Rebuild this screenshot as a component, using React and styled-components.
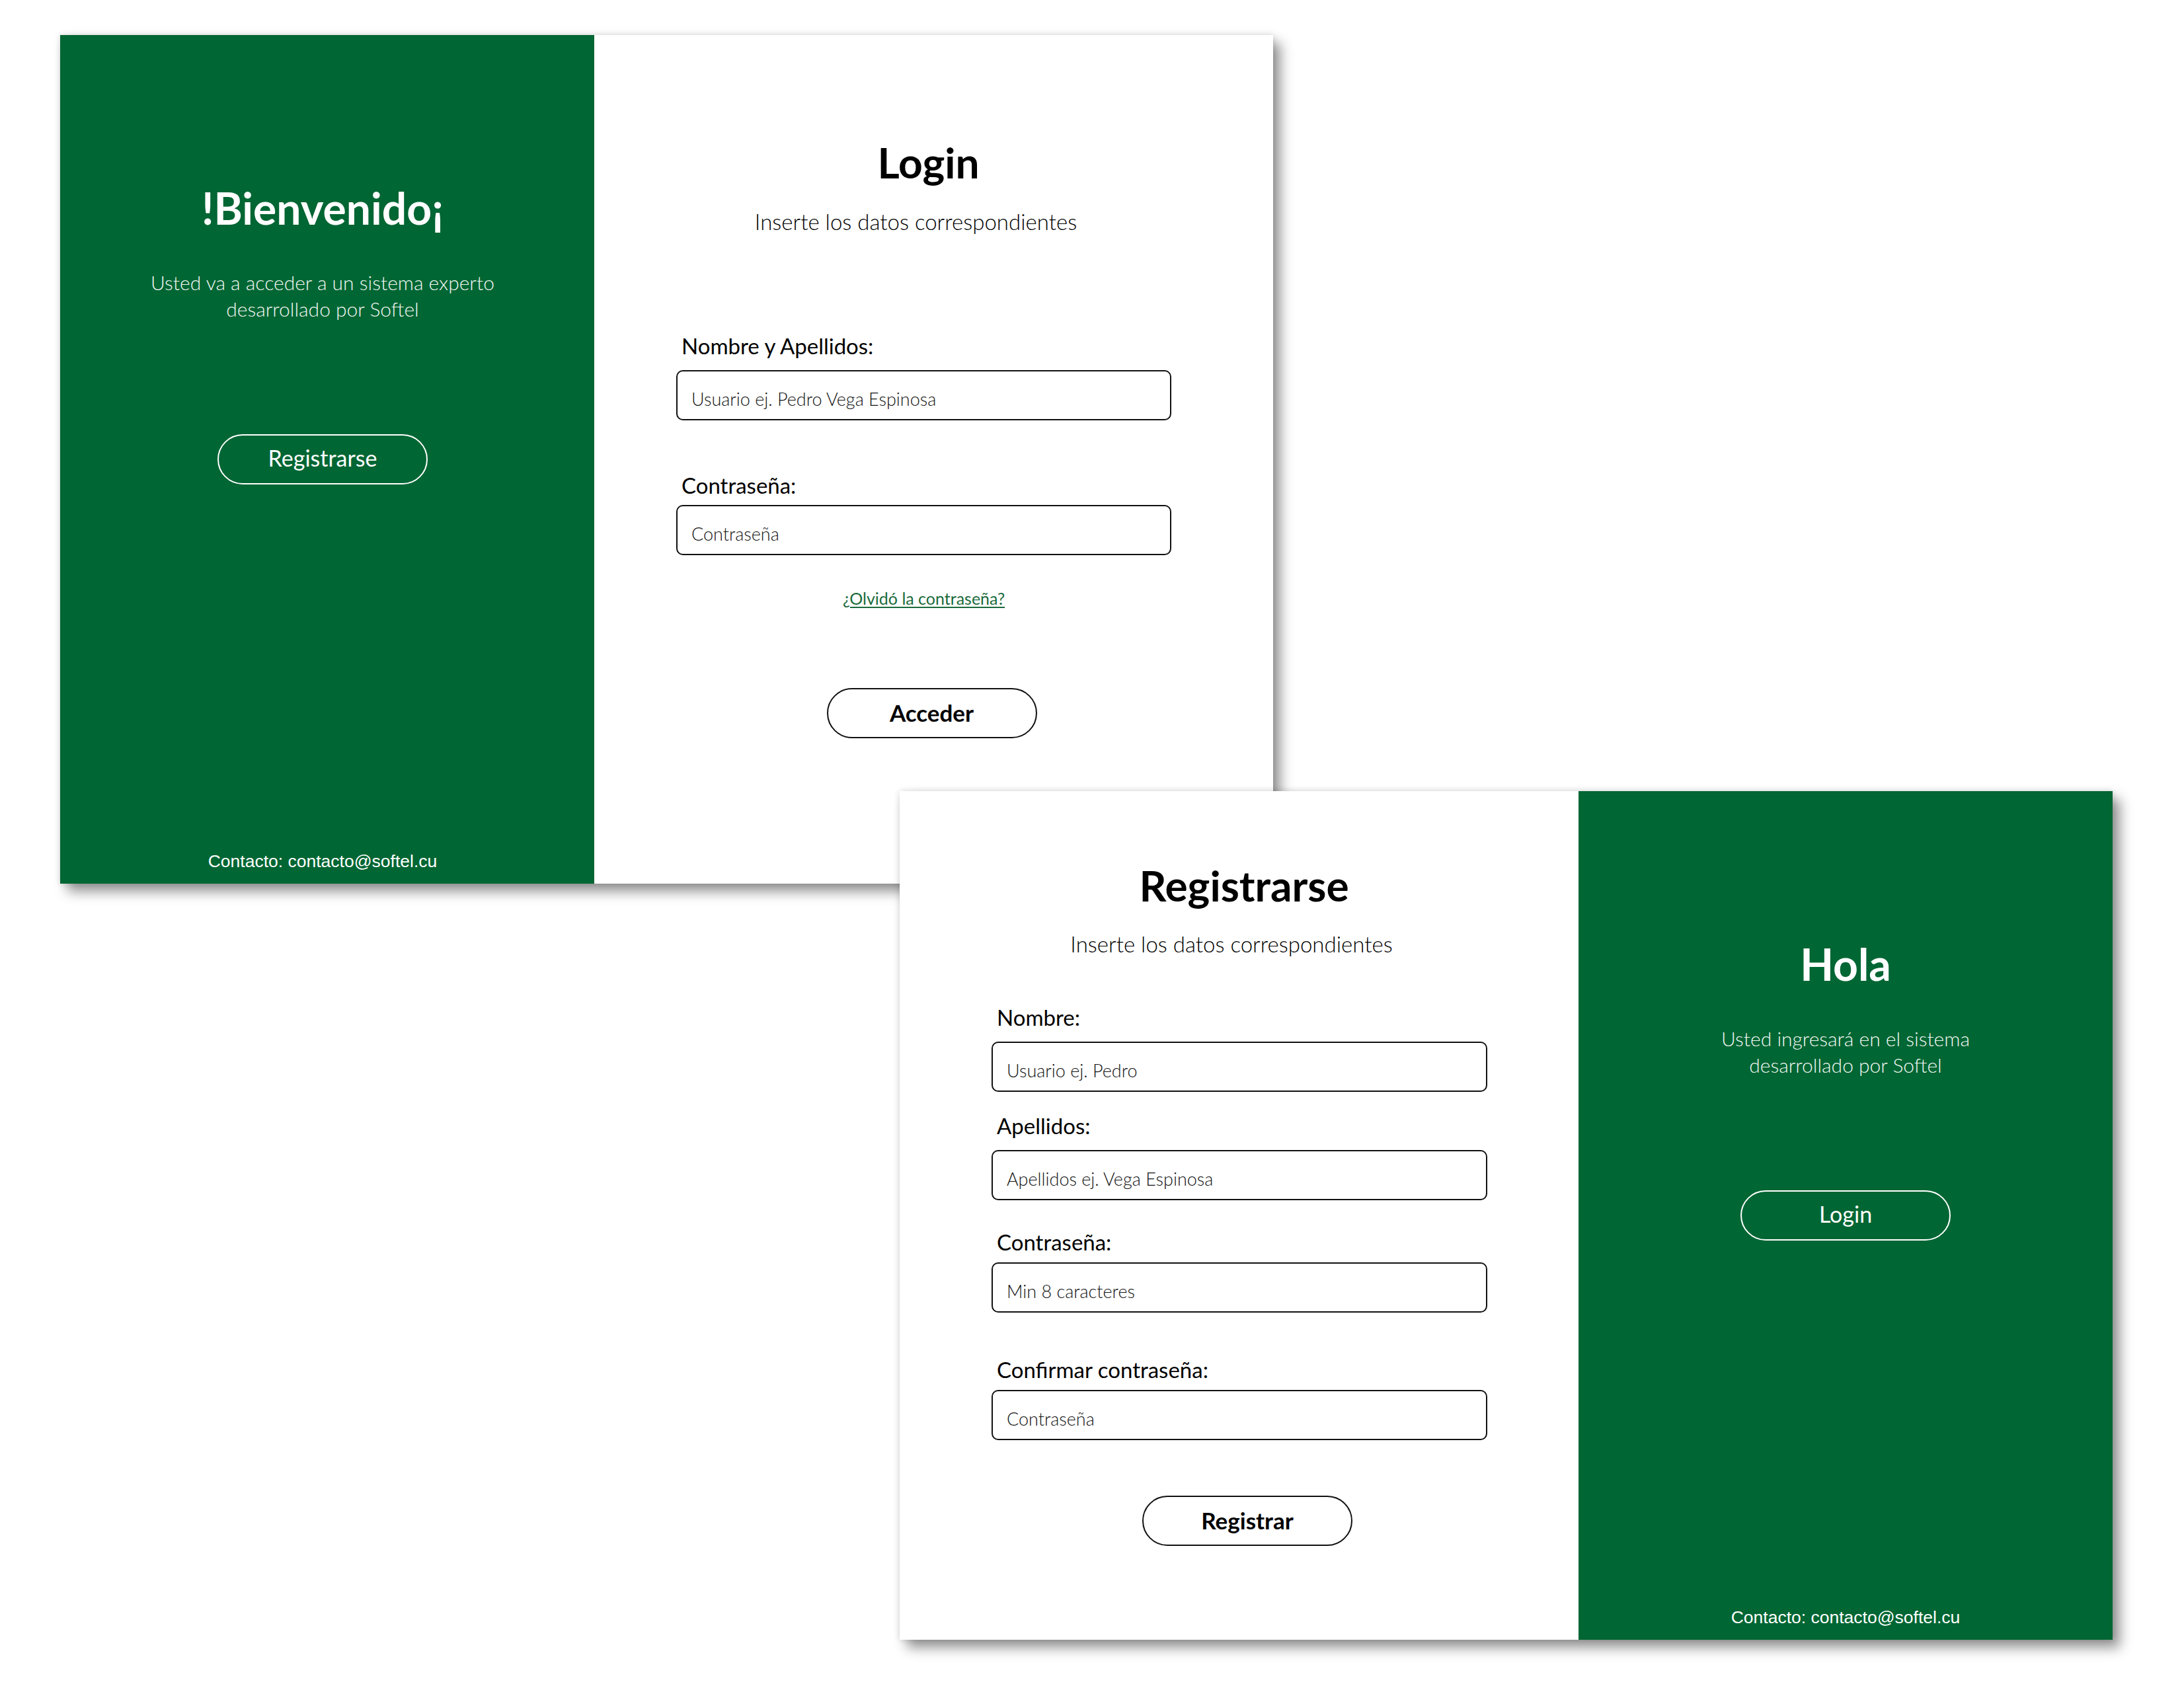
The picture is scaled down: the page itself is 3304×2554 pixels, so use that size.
import React from "react";
import styled, { createGlobalStyle } from "styled-components";

const GREEN = "#006633";

const GlobalStyle = createGlobalStyle`
  html, body {
    margin: 0;
    padding: 0;
    background: #ffffff;
  }
  body {
    font-family: Lato, "Open Sans", "Noto Sans", sans-serif;
  }
  * { box-sizing: border-box; }
`;

const Canvas = styled.main`
  position: relative;
  width: 3304px;
  height: 2554px;
  background: #ffffff;
  overflow: hidden;
`;

const Window = styled.section`
  position: absolute;
  left: ${(p) => p.$x}px;
  top: ${(p) => p.$y}px;
  width: 1835px;
  height: 1284px;
  display: flex;
  background: #ffffff;
  box-shadow: 11px 12px 18px rgba(0, 0, 0, 0.42), 0 0 9px rgba(0, 0, 0, 0.14);
`;

const SidePanel = styled.aside`
  flex: none;
  width: 808px;
  background: ${GREEN};
  color: #ffffff;
  display: flex;
  flex-direction: column;
  align-items: center;
  padding: 222px ${(p) => p.$shiftRight}px 19px 0;
`;

const SideTitle = styled.h1`
  margin: 0;
  font: 700 66px/80px Lato, "Open Sans", sans-serif;
  color: #ffffff;
`;

const SideText = styled.p`
  margin: 52px 0 0;
  font: 300 30px/40px Lato, "Open Sans", sans-serif;
  text-align: center;
  color: #f4f8f5;
`;

const GhostButton = styled.button`
  margin-top: 170px;
  width: 318px;
  height: 76px;
  border: 2px solid #ffffff;
  border-radius: 38px;
  background: transparent;
  color: #ffffff;
  font: 400 34px/1 Lato, "Open Sans", sans-serif;
  padding: 0 0 4px;
  cursor: pointer;
`;

const Contact = styled.p`
  margin: auto 0 0;
  font: 400 26.5px/30px "Liberation Sans", Arial, sans-serif;
  color: #ffffff;
`;

const FormPanel = styled.div`
  flex: 1;
  display: flex;
  flex-direction: column;
  align-items: center;
  padding: ${(p) => p.$top}px ${(p) => p.$right}px 0 ${(p) => p.$left}px;
`;

const FormTitle = styled.h2`
  margin: 0 0 0 14px;
  font: 700 64px/80px Lato, "Open Sans", sans-serif;
  color: #000000;
`;

const FormSubtitle = styled.p`
  margin: ${(p) => p.$gap}px 24px 0 0;
  font: 300 33px/40px Lato, "Open Sans", sans-serif;
  color: #000000;
`;

const FieldLabel = styled.label`
  align-self: stretch;
  display: block;
  margin-top: ${(p) => p.$gap}px;
  padding-left: 8px;
  font: 400 33px/40px Lato, "Open Sans", sans-serif;
  color: #000000;
`;

const TextInput = styled.input`
  align-self: stretch;
  display: block;
  width: 100%;
  height: 76px;
  margin-top: ${(p) => p.$gap}px;
  padding: 10px 21px 0;
  border: 2px solid #111111;
  border-radius: 10px;
  background: #ffffff;
  font: 300 27px Lato, "Open Sans", sans-serif;
  color: #111111;
  outline: none;
  &::placeholder {
    color: #111111;
    opacity: 1;
  }
`;

const ForgotLink = styled.a`
  margin-top: ${(p) => p.$gap}px;
  font: 400 25px/30px Lato, "Open Sans", sans-serif;
  color: #1b6b3c;
  text-decoration: underline;
  text-underline-offset: 3px;
`;

const PrimaryButton = styled.button`
  margin: ${(p) => p.$gap}px 0 0 24px;
  width: 318px;
  height: 76px;
  border: 2px solid #111111;
  border-radius: 38px;
  background: #ffffff;
  color: #000000;
  font: 700 35px/1 Lato, "Open Sans", sans-serif;
  padding: 0 0 2px;
  cursor: pointer;
`;

function Welcome({ title, lines, action, shiftRight }) {
  return (
    <SidePanel $shiftRight={shiftRight}>
      <SideTitle>{title}</SideTitle>
      <SideText>
        {lines[0]}
        <br />
        {lines[1]}
      </SideText>
      <GhostButton type="button">{action}</GhostButton>
      <Contact>Contacto: contacto@softel.cu</Contact>
    </SidePanel>
  );
}

function Fields({ fields }) {
  return fields.map((f) => (
    <React.Fragment key={f.id}>
      <FieldLabel htmlFor={f.id} $gap={f.labelGap}>
        {f.label}
      </FieldLabel>
      <TextInput
        id={f.id}
        type="text"
        placeholder={f.placeholder}
        $gap={f.inputGap}
      />
    </React.Fragment>
  ));
}

const loginFields = [
  { id: "l-name", label: "Nombre y Apellidos:", placeholder: "Usuario ej. Pedro Vega Espinosa", labelGap: 148, inputGap: 17 },
  { id: "l-pass", label: "Contraseña:", placeholder: "Contraseña", labelGap: 78, inputGap: 10 },
];

const registerFields = [
  { id: "r-name", label: "Nombre:", placeholder: "Usuario ej. Pedro", labelGap: 71, inputGap: 17 },
  { id: "r-last", label: "Apellidos:", placeholder: "Apellidos ej. Vega Espinosa", labelGap: 31, inputGap: 17 },
  { id: "r-pass", label: "Contraseña:", placeholder: "Min 8 caracteres", labelGap: 43, inputGap: 11 },
  { id: "r-conf", label: "Confirmar contraseña:", placeholder: "Contraseña", labelGap: 66, inputGap: 11 },
];

export default function App() {
  return (
    <>
      <GlobalStyle />
      <Canvas>
        <Window $x={91} $y={53}>
          <Welcome
            title="!Bienvenido¡"
            lines={["Usted va a acceder a un sistema experto", "desarrollado por Softel"]}
            action="Registrarse"
            shiftRight={14}
          />
          <FormPanel $top={153} $left={124} $right={154}>
            <FormTitle>Login</FormTitle>
            <FormSubtitle $gap={29}>Inserte los datos correspondientes</FormSubtitle>
            <Fields fields={loginFields} />
            <ForgotLink href="#" $gap={50}>
              ¿Olvidó la contraseña?
            </ForgotLink>
            <PrimaryButton type="button" $gap={121}>
              Acceder
            </PrimaryButton>
          </FormPanel>
        </Window>

        <Window $x={1361} $y={1197}>
          <FormPanel $top={103} $left={139} $right={138}>
            <FormTitle>Registrarse</FormTitle>
            <FormSubtitle $gap={28}>Inserte los datos correspondientes</FormSubtitle>
            <Fields fields={registerFields} />
            <PrimaryButton type="button" $gap={84}>
              Registrar
            </PrimaryButton>
          </FormPanel>
          <Welcome
            title="Hola"
            lines={["Usted ingresará en el sistema", "desarrollado por Softel"]}
            action="Login"
            shiftRight={0}
          />
        </Window>
      </Canvas>
    </>
  );
}
